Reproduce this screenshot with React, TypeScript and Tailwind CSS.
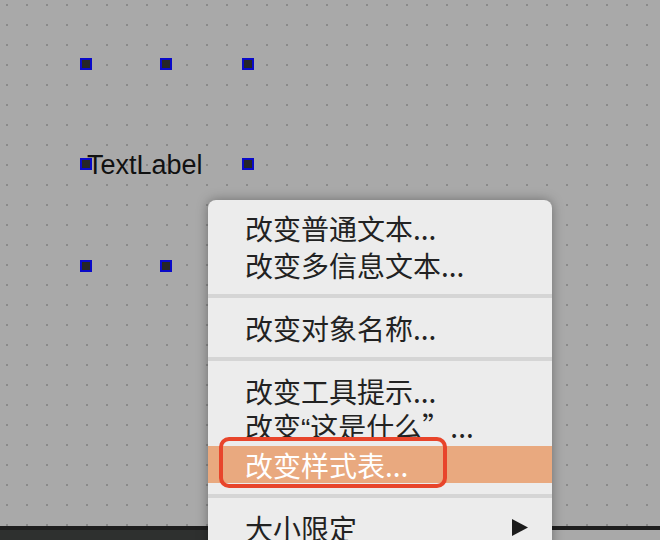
import React from "react";

const handles: [number, number][] = [
  [86, 64],
  [166, 64],
  [248, 64],
  [86, 164],
  [248, 164],
  [86, 266],
  [166, 266],
];

type Item = { label: React.ReactNode; sep?: boolean; active?: boolean; sub?: boolean };

const items: Item[] = [
  { label: "改变普通文本..." },
  { label: "改变多信息文本..." },
  { label: "", sep: true },
  { label: "改变对象名称..." },
  { label: "", sep: true },
  { label: "改变工具提示..." },
  {
    label: (
      <>
        改变<span className="font-['Liberation_Sans']">“</span>这是什么”...
      </>
    ),
  },
  { label: "改变样式表...", active: true },
  { label: "", sep: true },
  { label: "大小限定", sub: true },
];

const App: React.FC = () => {
  return (
    <div className="relative w-[660px] h-[540px] overflow-hidden flex flex-col font-['Liberation_Sans','Noto_Sans_CJK_SC',sans-serif]">
      {/* form canvas */}
      <div className="relative h-[526px] bg-[#a9a9a9] bg-[linear-gradient(90deg,#a9a9a9_6px,transparent_6px,transparent_8px,#a9a9a9_8px),linear-gradient(180deg,#a9a9a9_4px,#8a8a8a_4px,#8a8a8a_6px,#a9a9a9_6px)] bg-[size:20px_20px]">
        {handles.map(([x, y], i) => (
          <div
            key={i}
            className="absolute w-[12px] h-[12px] border-2 border-[#0a0ac8] bg-[#262626]"
            style={{ left: x - 6, top: y - 6 }}
          />
        ))}
        <div className="absolute left-[87px] top-[152px] text-[27px] leading-[27px] text-[#111]">
          TextLabel
        </div>
      </div>
      <div className="h-[4px] bg-[#1e1e1e]" />
      <div className="flex-1 flex">
        <div className="w-[300px] bg-[#2e302f]" />
        <div className="flex-1 bg-[#a9a9a9]" />
      </div>

      {/* context menu */}
      <div className="absolute left-[208px] top-[200px] w-[344px] h-[360px] pt-[9px] bg-[#ececec] rounded-[8px] shadow-[0_0_12px_rgba(0,0,0,0.35)] font-['Noto_Sans_CJK_SC',sans-serif]">
        {items.map((it, i) =>
          it.sep ? (
            <div key={i} className="py-[11px]">
              <div className="h-[4px] bg-[#d5d5d5]" />
            </div>
          ) : (
            <div
              key={i}
              className={
                "h-[37px] flex items-center justify-between pl-[37px] pr-[24px] text-[28px] leading-none " +
                (it.active ? "bg-[#e9a97f] text-white" : "text-[#222]")
              }
            >
              <span>{it.label}</span>
              {it.sub && (
                <svg width="16" height="17" viewBox="0 0 16 17">
                  <path d="M0 0 L16 8.5 L0 17 Z" fill="#1c1c1c" />
                </svg>
              )}
            </div>
          )
        )}
      </div>

      {/* highlight annotation */}
      <div className="absolute left-[219px] top-[437px] w-[228px] h-[51px] border-4 border-[#e8452b] rounded-[10px]" />
    </div>
  );
};

export default App;
